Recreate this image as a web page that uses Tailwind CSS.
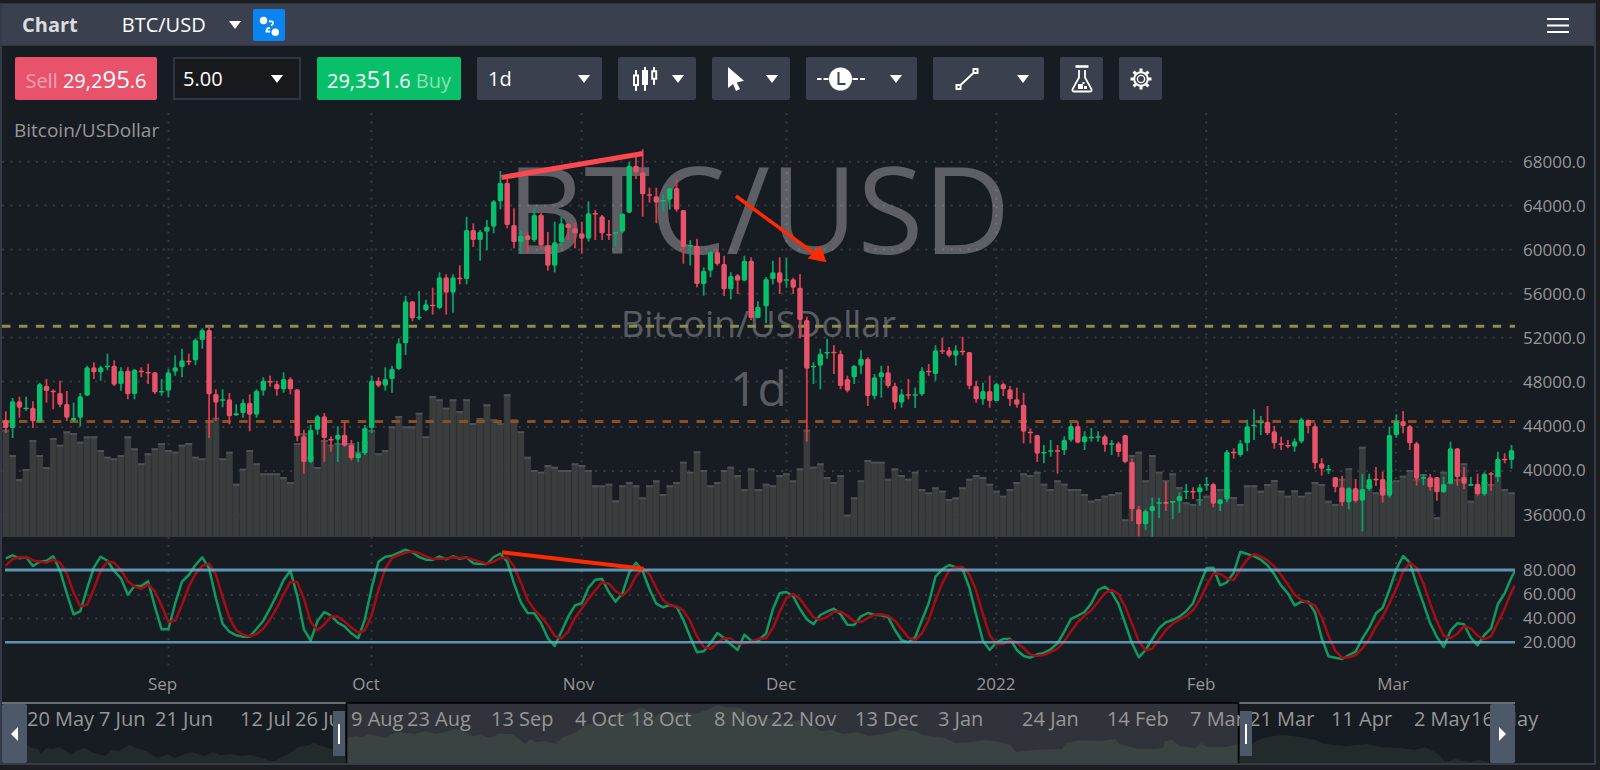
<!DOCTYPE html>
<html lang="en">
<head>
<meta charset="utf-8">
<meta name="viewport" content="width=device-width, initial-scale=1">
<title>Chart BTC/USD</title>
<script src="https://cdn.jsdelivr.net/npm/@tailwindcss/browser@4"></script>
</head>
<body class="bg-[#1c1d20] font-['Open_Sans','Noto_Sans',sans-serif] text-xl text-white">
<main class="mt-[3px] mr-1 border-x-2 border-b-2 border-[#343b47] bg-[#171b22]">

  <header class="flex h-[43px] items-center border-y border-[#2f3641] bg-[#3a404d] pr-[25px] pl-5">
    <h1 class="font-bold text-[#d9dbde]">Chart</h1>
    <label class="relative ml-11 flex items-center">
      <span class="sr-only">Instrument</span>
      <select class="h-9 w-[119px] appearance-none bg-transparent leading-9 text-white outline-none"><option>BTC/USD</option></select>
      <svg class="pointer-events-none absolute right-0 h-2 w-3" viewBox="0 0 12 8" fill="#fff"><path d="M0 0h12L6 8z"/></svg>
    </label>
    <button type="button" aria-label="Link charts" class="ml-3 h-8 w-8 rounded-xs bg-[#0a84f0]">
      <svg class="h-8 w-8" viewBox="0 0 32 32" fill="none" stroke="#fff" stroke-width="1.8"><g fill="#fff" stroke="none"><circle cx="10.500" cy="11.500" r="3.700"/><circle cx="22.300" cy="23.300" r="3.700"/></g><path d="M15.800 12.300h2.700q1.700.2 1.500 1.900t-2 2.200M17 19q-2.800-.2-3.200 1.400t-.4 2.100h3.800"/></svg>
    </button>
    <button type="button" aria-label="Menu" class="ml-auto">
      <svg class="h-5 w-[22px]" viewBox="0 0 22 20" stroke="#fff" stroke-width="2"><path d="M0 4h22M0 10.500h22M0 17h22"/></svg>
    </button>
  </header>

  <div class="flex h-[66px] gap-4 pt-[11px] pl-[13px]">
    <button type="button" class="flex h-[43px] w-[142px] shrink-0 items-baseline justify-center rounded-xs bg-[#e8526a] leading-[43px] whitespace-pre"><span class="text-[#f5a3b0]">Sell </span>29,2<span class="text-2xl leading-[43px]">95</span>.6</button>
    <label class="relative flex h-[43px] w-32 shrink-0 items-center border-2 border-[#2f3641] bg-[#18191c]">
      <span class="sr-only">Amount</span>
      <select class="h-9 w-full appearance-none bg-transparent pl-2 leading-9 text-white outline-none"><option>5.00</option></select>
      <svg class="pointer-events-none absolute right-4 h-2 w-3" viewBox="0 0 12 8" fill="#fff"><path d="M0 0h12L6 8z"/></svg>
    </label>
    <button type="button" class="flex h-[43px] w-36 shrink-0 items-baseline justify-center rounded-xs bg-[#08c06a] leading-[43px] whitespace-pre">29,3<span class="text-2xl leading-[43px]">51</span>.6<span class="text-[#8ee0b0]"> Buy</span></button>
    <label class="relative flex h-[43px] w-[125px] shrink-0 items-center rounded-xs bg-[#3a404d]">
      <span class="sr-only">Period</span>
      <select class="h-9 w-full appearance-none bg-transparent pl-[11px] leading-9 text-white outline-none"><option>1d</option></select>
      <svg class="pointer-events-none absolute right-3 h-2 w-3" viewBox="0 0 12 8" fill="#fff"><path d="M0 0h12L6 8z"/></svg>
    </label>
    <button type="button" aria-label="Chart type" class="flex h-[43px] w-[78px] shrink-0 items-center justify-between rounded-xs bg-[#3a404d] pr-3 pl-[14px]">
      <svg class="h-6 w-[26px]" viewBox="0 0 26 24" fill="none" stroke="#fff" stroke-width="2"><path d="M4 3v5M4 19v5M13 0v24M22 0v4M22 12v6"/><path d="M2 8.500h4v9.500H2zM20.200 4.200h4v7.600h-4z"/><path fill="#fff" stroke="none" d="M10 3h6v15h-6z"/></svg>
      <svg class="h-2 w-3" viewBox="0 0 12 8" fill="#fff"><path d="M0 0h12L6 8z"/></svg>
    </button>
    <button type="button" aria-label="Pointer" class="flex h-[43px] w-[78px] shrink-0 items-center justify-between rounded-xs bg-[#3a404d] pr-3 pl-4">
      <svg class="h-6 w-4" viewBox="0 0 16 24" fill="#fff"><path d="M0 0v21l5-4 3 7 4-2-3.300-6.500 7.300-1.700z"/></svg>
      <svg class="h-2 w-3" viewBox="0 0 12 8" fill="#fff"><path d="M0 0h12L6 8z"/></svg>
    </button>
    <button type="button" aria-label="Line orders" class="flex h-[43px] w-[111px] shrink-0 items-center justify-between rounded-xs bg-[#3a404d] pr-[15px] pl-[11px]">
      <svg class="h-6 w-12" viewBox="0 0 48 24" fill="none"><path d="M0 12h4.500M6.500 12h5M35.500 12h5.500M43 12h5" stroke="#fff" stroke-width="2"/><circle cx="23.500" cy="12" r="11.500" fill="#fff"/><path d="M21.500 5v12h7" stroke="#3a404d" stroke-width="2"/></svg>
      <svg class="h-2 w-3" viewBox="0 0 12 8" fill="#fff"><path d="M0 0h12L6 8z"/></svg>
    </button>
    <button type="button" aria-label="Drawing tools" class="flex h-[43px] w-[111px] shrink-0 items-center justify-between rounded-xs bg-[#3a404d] pr-[15px] pl-[22px]">
      <svg class="h-6 w-6" viewBox="0 0 24 24" fill="none" stroke="#fff" stroke-width="2"><path d="M5 18.500 19 5.500M1.500 18h4v4h-4zM18.500 2h4v4h-4z"/></svg>
      <svg class="h-2 w-3" viewBox="0 0 12 8" fill="#fff"><path d="M0 0h12L6 8z"/></svg>
    </button>
    <button type="button" aria-label="Studies" class="flex h-[43px] w-[43px] shrink-0 items-center justify-center rounded-xs bg-[#3a404d]">
      <svg class="h-7 w-6" viewBox="0 0 24 28" fill="none" stroke="#fff" stroke-width="1.800"><path d="M5.500 1.500h13" stroke-width="2.600"/><path d="M9 5v7.500L2.600 24q-.8 2.500 1.900 2.500h15q2.700 0 1.900-2.500L15 12.500V5"/><g fill="#fff" stroke="none"><path d="M8 19h5v5H8zM14 21h3v3h-3zM12.500 17h2v2h-2z"/></g></svg>
    </button>
    <button type="button" aria-label="Settings" class="flex h-[43px] w-[43px] shrink-0 items-center justify-center rounded-xs bg-[#3a404d]">
      <svg class="h-6 w-6" viewBox="-12 -12 24 24" fill="none" stroke="#fff"><circle r="6.800" stroke-width="2"/><circle r="3.600" stroke-width="1.400"/><g stroke-width="3"><path d="M0-7v-3.500M0 7v3.500M-7 0h-3.500M7 0h3.500M5-5l2.400-2.400M-5-5l-2.400-2.400M5 5l2.400 2.400M-5 5l-2.400 2.400"/></g></svg>
    </button>
  </div>

  <div class="flex">
    <section class="relative min-w-0 flex-1" aria-label="Price chart">
      <svg id="grid" class="absolute inset-0 h-[556px] w-full" viewBox="2 112 1513 556" preserveAspectRatio="none"></svg>
      <div class="absolute inset-x-0 top-4 flex flex-col items-center text-white/30">
        <span class="text-[120px] leading-[160px]">BTC/USD</span>
        <span class="mt-3 text-4xl leading-[48px]">Bitcoin/USDollar</span>
        <span class="mt-3 text-5xl leading-[56px]">1d</span>
      </div>
      <svg id="series" class="relative block h-[556px] w-full" viewBox="2 112 1513 556" preserveAspectRatio="none"></svg>
      <h2 class="absolute top-1.5 left-3 text-[19px] leading-6 text-[#979797]">Bitcoin/USDollar</h2>
      <div id="months" class="relative h-[34px] text-[17px] leading-6 text-[#979797]"></div>
    </section>
    <div id="axis" class="relative w-[79px] shrink-0 text-[17px] leading-6 text-[#979797]"></div>
  </div>

  <nav class="relative mr-[79px] h-[61px] text-[#979797]" aria-label="Time range">
    <svg id="range" class="block h-[61px] w-full" viewBox="2 702 1513 61" preserveAspectRatio="none"></svg>
    <div id="dates" class="absolute inset-x-0 top-[5px] leading-6"></div>
    <button type="button" aria-label="Range start" class="absolute top-[9px] left-[21.9%] flex h-[45px] w-3 items-center justify-center bg-[#4d5868]"><span class="h-5 w-0.5 bg-white"></span></button>
    <button type="button" aria-label="Range end" class="absolute top-[9px] left-[81.8%] flex h-[45px] w-3 items-center justify-center bg-[#4d5868]"><span class="h-5 w-0.5 bg-white"></span></button>
    <button type="button" aria-label="Scroll left" class="absolute top-0.5 left-0 flex h-[59px] w-[25px] items-center justify-center rounded-xs bg-[#4d5868]"><svg class="h-[14px] w-[7px]" viewBox="0 0 7 14" fill="#fff"><path d="M7 0v14L0 7z"/></svg></button>
    <button type="button" aria-label="Scroll right" class="absolute top-0.5 right-0 flex h-[59px] w-[25px] items-center justify-center rounded-xs bg-[#4d5868]"><svg class="h-[14px] w-[7px]" viewBox="0 0 7 14" fill="#fff"><path d="M0 0v14l7-7z"/></svg></button>
  </nav>
</main>

<script>
// Each candle: colour, high, body top, body bottom, low, in thirds of a pixel below the block's base line.
const blocks = [
[300, `r334 360 384 399,g294 304 384 414,r290 304 323 353,g290 323 327 332,r304 323 364 384,g248 252 366 368,r237 257 273 308,r268 272 276 328,r242 279 314 322,r273 312 353 363,g308 354 361 366,g279 289 353 379,g197 202 287 287,r187 202 217 237,g197 202 217 242,g161 197 201 211,r181 197 254 258,g202 212 252 272,r202 212 283 298,g207 209 282 298,r202 212 216 232,r191 216 220 252,r217 217 277 282,g237 273 277 287,g207 217 272 292,g166 202 215 227,g146 181 201 232,r161 182 186 196,g115 120 181 195,g85 90 120 146,r80 90 283 414,r268 282 308 363,g268 298 302 322,r279 298 349 373,g313 340 346 348,g298 308 339 353,r283 308 344 394,g268 272 344 353,g232 242 272 287,r227 243 247 260,r242 252 268 287,g217 237 268 278,r232 237 268 283,r268 268 409 424,r389 409 486 521,g374 389 486 490,g344 349 389 404,r339 349 414 486,r409 417 421 455,g379 404 419 486,r365 404 437 440,r420 434 475 481,g425 460 475 486,g375 384 460 465,g227 242 384 399,r232 242 257 262,g202 237 257 272,g197 207 237 278,g115 130 207 210`],
[140, `g468 484 610 645,r484 484 535 544,g453 530 535 540,g479 493 511 514,r443 494 498 524,g397 412 504 508,r403 412 458 524,g403 412 458 518,r376 413 417 433,g230 270 417 433,r250 270 300 321,g270 275 300 362,g240 260 275 331,g180 184 260 280,g93 128 184 208,r113 128 255 265,r205 255 306 325,g270 287 306 341,r277 286 300 341,g205 225 301 306,r220 224 316 330,r276 316 377 392,g245 307 377 397,g230 250 306 320,r250 251 264 300,r250 265 280 325,r245 280 296 341,g184 220 296 305,r210 219 223 300,r225 229 280 300,r240 282 286 300,g275 276 280 321,g220 221 275 280,g66 77 218 219,r48 77 97 117,r28 97 163 230,r143 163 167 188,r143 169 188 250,g163 180 184 214,g144 144 179 209,r118 144 209 215,r210 210 321 371,g301 315 319 377,r296 317 432 442,g382 392 432 467,g332 336 392 412,r326 336 372 377,r347 372 448 468,g397 408 448 478,r402 406 422 462,g347 362 422 423,r352 362 534 540,g484 500 534 535,g412 417 499 550,g362 397 417 433,r352 397 428 462,g354 418 422 443,r413 418 443 462,r402 443 540 595,r530 540 686 905,g667 677 681 732,g626 641 677 748,g596 636 640 656,r616 635 639 702,r631 641 738 748,r707 717 752 757,g676 677 712 732,g631 656 677 702,r652 656 768 798,g702 712 768 778,g677 697 712 773,r677 697 738 743,r728 738 788 808,g748 763 788 803,r717 763 767 778,g743 763 767 804,g682 692 763 767,r672 692 696 708,g616 631 702 722,r594 631 635 642,r621 631 647 652,g616 631 647 677,r590 632 636 646,r636 636 738 748,r723 738 778 788,g728 753 778 794,r707 753 783 803,g728 732 783 784,r728 732 748 768,r738 748 778 798,r743 778 794 803,r758 794 875 910,r865 875 879 910`],
[300, `r405 405 461 486,g435 456 460 490,g420 451 455 470,r435 451 455 521,g409 420 451 465,g370 378 420 425,r364 378 428 430,g394 409 427 450,g384 410 414 425,g394 409 413 425,r404 409 435 455,g420 430 434 465,r425 430 456 470,r405 405 486 490,r476 486 628 663,r618 628 673 709,g628 633 673 689,g593 618 633 710,g593 607 611 654,r546 606 611 633,g603 603 608 658,g577 588 603 638,g552 572 576 597,r562 573 577 597,g552 562 577 617,g531 552 556 572,r548 552 611 622,g598 598 612 633,g450 455 598 607,r445 455 459 476,g420 430 465 470`],
[380, `g119 139 190 214,g88 134 138 180,g108 125 129 165,r78 125 160 165,r138 154 190 206,r170 190 194 210,r180 195 199 205,g175 184 200 215,g113 118 185 190,r118 120 138 160,r130 138 250 266,r235 250 266 287,g255 267 271 282,r291 291 322 337,r287 322 367 378,g322 324 367 388,r297 324 363 368,g282 327 362 454,g281 297 327 332,r261 296 300 318,r275 297 347 368,g140 165 347 353,g103 123 165 173,r93 123 138 160,r135 138 190 210,r185 190 296 317,g282 292 296 316,r282 292 322 332,r291 291 337 362,g291 312 337 338,g185 205 311 312,r205 205 291 317,r261 291 311 327,g291 312 317 317,r281 311 343 347,g277 281 343 347,r276 280 284 332,g215 236 291 306,r220 236 240 250,g195 210 240 266`]
];
const volumes = [
[300, [392,468,540,510,423,468,504,417,437,397,402,428,412,412,453,473,478,468,412,448,493,463,448,432,453,458,437,432,473,478,365,356,478,458,554,509,453,493,523,523,523,534,549,432,402,473,504,423,437,432,432,432,458,428,393,463,453,382,351,382,382]],
[140, [821,892,771,781,806,781,816,781,852,837,796,841,852,766,841,877,953,993,998,978,983,993,993,973,978,993,1039,1039,1034,1084,1039,1029,1039,1075,1039,1024,1065,1039,1029,968,998,937,993,1039,1029,993,983,1008,1050,988,1050,1034,1039,1008,1003,1024,988,872,983,973,1014,1029,1008,1127,1075,1024,963,968,968,1019,988,1008,1019,998,1050,1060,1045,1055,1080,1075,1045,1019,1008,1014,1034,1055,1070,1050,1029,1003,1008]],
[300, [518,554,570,544,554,570,570,585,605,600,590,585,580,661,468,458,544,468,518,544,523,564,610,615,600,590,580,570,570]],
[380, [354,375,319,319,335,315,303,335,350,334,350,340,309,315,365,375,299,268,334,203,319,340,330,310,304,290,273,299,285,299,415,278,310,300,253,365,325,309,315,289,330,340]]
];
const stochastic = [70,61,70,66,93,80,77,64,107,175,238,229,160,97,65,77,108,130,179,153,153,139,215,283,283,205,140,120,90,67,100,190,266,290,301,305,305,282,257,220,180,135,107,182,283,317,258,231,242,263,274,295,310,253,158,80,65,62,53,44,52,66,74,75,64,73,64,71,67,85,87,87,66,56,80,145,202,234,235,265,310,333,290,245,211,205,158,134,132,172,200,175,113,83,108,163,206,217,210,215,255,306,352,349,325,294,309,328,345,299,317,318,295,223,174,171,184,222,253,268,240,230,221,238,269,270,244,234,239,241,246,285,316,322,307,255,205,125,103,90,97,102,158,240,317,345,322,312,311,345,363,368,358,354,343,325,290,252,242,231,205,165,155,172,207,265,325,367,345,312,280,262,255,245,229,205,150,99,98,151,142,113,50,57,64,74,91,118,152,175,211,200,200,232,310,364,368,372,360,350,310,278,235,218,163,103,63,83,148,205,265,306,336,287,265,268,308,331,300,280,207,175,127];

const xAt = i => +(5.8 + 6.776 * i + (i > 111 ? 1.4 : 0)).toFixed(1);
const months = [['Sep',168.5,162.5],['Oct',371.5,366],['Nov',581.6,578.5],['Dec',786.5,781],['2022',996.3,996],['Feb',1206.3,1201],['Mar',1396,1393]];
const rows = [161.7,205.6,249.6,293.7,337.6,381.6,427,471,515,595,618.500];

let grid = '';
for (const [, x] of months) grid += `<path d="M${x} 113V666"/>`;
for (const y of rows) grid += `<path d="M2 ${y}H1515"/>`;
grid = `<g stroke="#363b41" stroke-width="2" stroke-dasharray="2 6.470">${grid}</g>`;
let bars = '', k = 0;
for (const [base, list] of volumes) for (const v of list) {
  const x = xAt(k), y = +(base + v / 3).toFixed(1), w = k === 111 ? 8.2 : 6.8;
  bars += `<path fill="#363a3a" d="M${(x - 3.4).toFixed(1)} ${y - 1}h${w}V536.500h-${w}z"/><path fill="#393d3d" d="M${(x - 2.6).toFixed(1)} ${y}h5.300V536.500h-5.300z"/><path fill="#4c5155" d="M${(x - 3.4).toFixed(1)} ${y - 1}h${w}v2h-${w}z"/>`;
  k++;
}
document.getElementById('grid').innerHTML = grid + bars + '<path stroke="#343a3c" d="M2 536.500H1515"/>';

let s = '<g fill="none" stroke-width="3" stroke-dasharray="8.470"><path stroke="#8b8e50" d="M2 326.300H1515"/><path stroke="#794823" d="M2 421.500H1515"/></g>';
k = 0;
for (const [base, text] of blocks) for (const c of text.split(',')) {
  const [h, t, b, l] = c.slice(1).split(' ').map(n => +(base + n / 3).toFixed(1));
  const x = xAt(k++), up = c[0] === 'g', edge = Math.min(1.6, Math.max(0, (b - t) / 2));
  s += `<path stroke="${up ? '#0a9f69' : '#d93d4b'}" stroke-width="1.800" d="M${x} ${h}V${l}"/>`
    + `<rect x="${(x - 2.7).toFixed(1)}" y="${t}" width="5.400" height="${Math.max(1.5, b - t).toFixed(1)}" rx="${edge.toFixed(1)}" fill="${up ? '#08bf6b' : '#e8526a'}"/>`;
}
s += '<path stroke="#e0702c" stroke-opacity=".18" stroke-width="3" stroke-dasharray="8.470" d="M2 421.500H1515"/>';
const average = stochastic.map((v, i, a) => i === 0 ? 92 : i === 1 ? 72 : (v + a[i - 1] + a[i - 2]) / 3);
const line = list => list.map((v, i) => `${xAt(i)},${(535 + v / 3).toFixed(1)}`).join(' ');
s += `<g fill="none" stroke-width="2.500" stroke-linejoin="round"><polyline stroke="#109a60" points="${line(stochastic)} 1515,571"/><polyline stroke="#a50d14" points="${line(average)} 1515,585"/></g>`;
s += '<g fill="none" stroke="#6fb4d6" stroke-opacity=".8"><path stroke-width="3" d="M5 570H1515"/><path stroke-width="2.500" d="M5 642.300H1515"/></g>';
s += '<g fill="none"><path stroke="#ff4750" stroke-width="5" d="M501.500 177.500 643 153.500"/><path stroke="#ff2a00" stroke-width="4" d="M502 552.300 643.600 568.800"/><path stroke="#ff2a00" stroke-width="3.500" d="M736 196 815 254"/></g><path fill="#ff2a00" d="M826.500 262.300 807.500 258.500 820.500 245.500z"/>';
document.getElementById('series').innerHTML = s;

const at = x => ((x - 2) / 15.13).toFixed(2);
document.getElementById('months').innerHTML = months.map(([m, , x]) => `<span class="absolute top-1 -translate-x-1/2" style="left:${at(x)}%">${m}</span>`).join('');
const scale = [['68000.0',162],['64000.0',206],['60000.0',250],['56000.0',294],['52000.0',338],['48000.0',382],['44000.0',426],['40000.0',470],['36000.0',515],['80.000',570],['60.000',594],['40.000',618],['20.000',642]];
document.getElementById('axis').innerHTML = scale.map(([t, y]) => `<span class="absolute left-2" style="top:${y - 124}px">${t}</span>`).join('');

const area = '27,745 32,748 38,749 41,754 46,748 52,749 60,747 66,751 72,755 76,751 85,748 92,752 98,754 105,756 112,750 119,751 125,747 130,745 136,748 146,751 152,755 158,758 168,754 174,758 182,755 192,752 198,754 205,756 212,752 220,755 232,754 240,756 250,755 262,758 270,761 275,761 284,756 292,752 298,747 306,746 314,743 322,746 334,750 343,747 348,738 355,736 362,737 369,734 378,736 385,738 393,734 400,732 415,734 425,731 435,734 445,732 457,729 465,732 472,736 480,735 490,738 498,734 513,734 520,740 525,744 530,739 536,742 545,741 556,744 563,737 575,733 585,725 600,722 615,718 630,712 642,707 655,716 662,713 680,712 695,714 710,709 716,705 725,707 740,708 750,714 765,718 785,722 800,720 815,725 820,731 832,730 843,734 857,732 868,736 883,734 893,732 900,729 915,731 923,735 945,738 955,743 970,742 985,740 1000,742 1010,745 1016,752 1035,750 1062,749 1066,743 1080,740 1100,741 1115,739 1120,744 1138,749 1155,749 1163,748 1165,741 1172,740 1180,746 1195,748 1201,743 1207,747 1225,747 1239,744 1252,744 1258,740 1272,736 1285,735 1300,737 1315,740 1325,744 1345,746 1368,744 1380,747 1400,748 1415,750 1425,747 1440,755 1445,762 1456,759 1470,762 1480,760 1490,763';
document.getElementById('range').innerHTML = `<defs><clipPath id="window"><path d="M347 702h891v61H347z"/></clipPath></defs><polygon fill="#222a2b" points="27,763 ${area}"/><path fill="#31333b" d="M347 703h891v60H347z"/><polygon clip-path="url(#window)" fill="#3a4242" points="27,763 ${area}"/><path stroke="#6c6d6e" stroke-width="2" d="M2 703H346M1239 703H1515"/><path fill="none" stroke="#000" stroke-width="1.500" d="M346.500 763V703H1238.500V763"/>`;
const dates = [['20 May',27],['7 Jun',99],['21 Jun',155],['12 Jul',240],['26 Jul',295],['9 Aug',351],['23 Aug',407],['13 Sep',491],['4 Oct',575],['18 Oct',631],['8 Nov',714],['22 Nov',771],['13 Dec',855],['3 Jan',938],['24 Jan',1022],['14 Feb',1107],['7 Mar',1190],['21 Mar',1249],['11 Apr',1331],['2 May',1414],['16 May',1471]];
document.getElementById('dates').innerHTML = dates.map(([t, x]) => `<span class="absolute top-0 whitespace-nowrap" style="left:${at(x)}%">${t}</span>`).join('');
</script>
</body>
</html>
